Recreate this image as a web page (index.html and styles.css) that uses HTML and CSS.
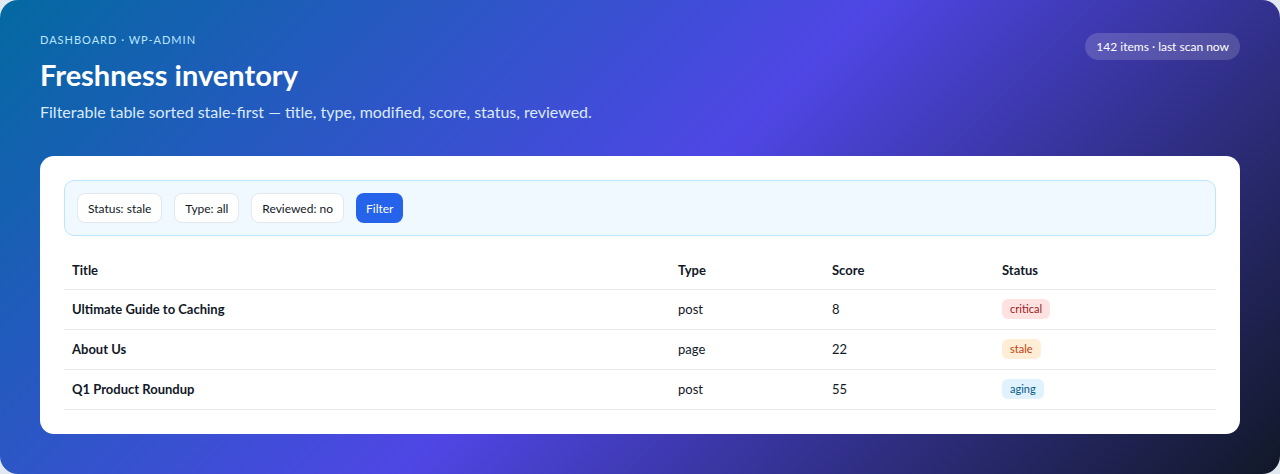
FILE: index.html
```html
<!DOCTYPE html>
<html lang="en">
<head>
    <meta charset="UTF-8">
    <meta name="viewport" content="width=device-width, initial-scale=1.0">
    <title>Freshness inventory</title>
    <link rel="stylesheet" href="styles.css">
</head>
<body>
    <div class="hero">
        <header class="top">
            <div>
                <p class="eyebrow">Dashboard · wp-admin</p>
                <h1>Freshness inventory</h1>
                <p class="lead">Filterable table sorted stale-first — title, type, modified, score, status, reviewed.</p>
            </div>
            <span class="meta">142 items · last scan now</span>
        </header>

        <section class="card">
            <div class="filters">
                <span class="chip">Status: stale</span>
                <span class="chip">Type: all</span>
                <span class="chip">Reviewed: no</span>
                <button class="btn" type="button">Filter</button>
            </div>

            <table class="inventory">
                <thead>
                    <tr>
                        <th class="col-title">Title</th>
                        <th class="col-type">Type</th>
                        <th class="col-score">Score</th>
                        <th>Status</th>
                    </tr>
                </thead>
                <tbody>
                    <tr>
                        <td class="title">Ultimate Guide to Caching</td>
                        <td>post</td>
                        <td>8</td>
                        <td><span class="badge critical">critical</span></td>
                    </tr>
                    <tr>
                        <td class="title">About Us</td>
                        <td>page</td>
                        <td>22</td>
                        <td><span class="badge stale">stale</span></td>
                    </tr>
                    <tr>
                        <td class="title">Q1 Product Roundup</td>
                        <td>post</td>
                        <td>55</td>
                        <td><span class="badge aging">aging</span></td>
                    </tr>
                </tbody>
            </table>
        </section>
    </div>
</body>
</html>
```

FILE: styles.css
```css
:root {
    --ink : #111827;
    --line : #e5e7eb;
    --blue : #2563eb;
}

* {
    box-sizing : border-box;
}

html, body {
    margin : 0;
    height : 100%;
}

body {
    background-color : #e2e8f0;
    font-family : Lato, "Noto Sans", sans-serif;
    color : var(--ink);
}

.hero {
    min-height : 100%;
    border-radius : 18px;
    padding : 32px 40px 40px;
    background : linear-gradient(135deg, #0369a1 0%, #4f46e5 50%, #111827 100%);
}

.top {
    display : flex;
    justify-content : space-between;
    align-items : flex-start;
}

.eyebrow {
    margin : 0;
    color : #bae6fd;
    font-size : 11px;
    line-height : 16px;
    letter-spacing : 1px;
    text-transform : uppercase;
}

h1 {
    margin : 9px 0 0;
    color : #fff;
    font-size : 29px;
    line-height : 36px;
}

.lead {
    margin : 8px 0 0;
    color : #dbeafe;
    font-size : 16px;
    line-height : 22px;
}

.meta {
    margin-top : 1px;
    padding : 6px 11px;
    border-radius : 999px;
    background-color : rgba(255, 255, 255, 0.16);
    color : #fff;
    font-size : 12px;
    line-height : 15px;
}

.card {
    margin-top : 33px;
    padding : 24px;
    border-radius : 14px;
    background-color : #fff;
}

.filters {
    display : flex;
    gap : 12px;
    align-items : center;
    padding : 12px;
    border : 1px solid #bae6fd;
    border-radius : 10px;
    background-color : #f0f9ff;
}

.chip, .btn {
    height : 30px;
    padding : 0 10px;
    display : inline-flex;
    align-items : center;
    border-radius : 8px;
    font-family : inherit;
    font-size : 12px;
}

.chip {
    border : 1px solid #e2e8f0;
    background-color : #fff;
}

.btn {
    border : none;
    background-color : var(--blue);
    color : #fff;
}

.inventory {
    width : 100%;
    margin-top : 16px;
    border-collapse : collapse;
    font-size : 13px;
}

.inventory th,
.inventory td {
    height : 40px;
    padding : 0 8px;
    text-align : left;
    border-bottom : 1px solid var(--line);
}

.inventory th {
    height : 37px;
    font-weight : 700;
}

.col-title { width : 606px; }
.col-type { width : 154px; }
.col-score { width : 170px; }

.title {
    font-weight : 700;
}

.badge {
    display : inline-block;
    padding : 2px 8px;
    border-radius : 6px;
    font-size : 11px;
    line-height : 16px;
}

.critical { background-color : #fee2e2; color : #991b1b; }
.stale { background-color : #ffedd5; color : #c2410c; }
.aging { background-color : #e0f2fe; color : #075985; }
```
